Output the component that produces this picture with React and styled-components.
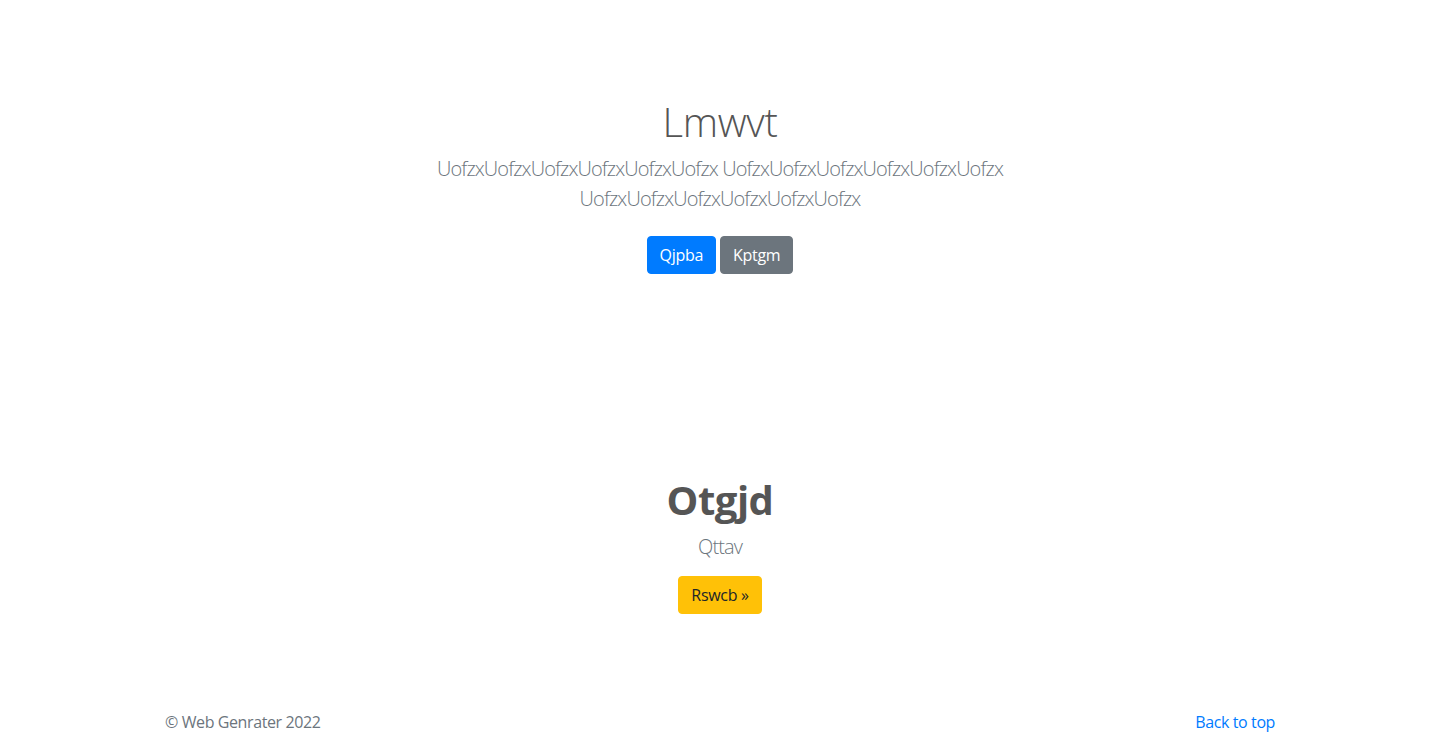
import styled, { createGlobalStyle } from 'styled-components';

const GlobalStyle = createGlobalStyle`
  * {
    box-sizing: border-box;
  }
  body {
    margin: 0;
    background: #fff;
    font-family: "Open Sans", "Noto Sans", Arial, sans-serif;
    font-size: 16px;
    line-height: 1.5;
    color: #212529;
  }
`;

const Page = styled.main`
  display: flex;
  flex-direction: column;
  min-height: 100vh;
`;

const Hero = styled.section`
  display: flex;
  flex-direction: column;
  align-items: center;
  text-align: center;
  padding: ${({ $top }) => $top}px 16px ${({ $bottom }) => $bottom}px;
`;

const Heading = styled.h1`
  margin: 0 0 8px;
  font-size: 40px;
  line-height: 1.2;
  font-weight: ${({ $bold }) => ($bold ? 700 : 300)};
  letter-spacing: ${({ $bold }) => ($bold ? '-0.5px' : '-0.3px')};
  color: #555;
`;

const Lead = styled.p`
  margin: 0 0 ${({ $mb }) => $mb}px;
  max-width: 590px;
  font-size: 20px;
  line-height: 1.5;
  font-weight: 300;
  letter-spacing: -0.9px;
  color: #6c757d;
`;

const Actions = styled.p`
  display: flex;
  justify-content: center;
  gap: 4px;
  margin: 0;
`;

const variants = {
  primary: { bg: '#007bff', fg: '#fff' },
  secondary: { bg: '#6c757d', fg: '#fff' },
  warning: { bg: '#ffc107', fg: '#212529' },
};

const Button = styled.a`
  display: inline-block;
  padding: 6px 12px;
  border: 1px solid ${({ $variant }) => variants[$variant].bg};
  border-radius: 4px;
  font-size: 16px;
  line-height: 1.5;
  letter-spacing: -0.3px;
  text-decoration: none;
  cursor: pointer;
  background: ${({ $variant }) => variants[$variant].bg};
  color: ${({ $variant }) => variants[$variant].fg};
`;

const Footer = styled.footer`
  width: 100%;
  max-width: 1140px;
  margin: 0 auto;
  padding: 0 15px 48px;
  display: flex;
  justify-content: space-between;
  align-items: center;
  color: #6c757d;
  font-size: 16px;
  letter-spacing: -0.4px;
`;

const FooterLink = styled.a`
  color: #007bff;
  text-decoration: none;
`;

const word = 'UofzxUofzxUofzxUofzxUofzxUofzx';

export default function App() {
  return (
    <>
      <GlobalStyle />
      <Page>
        <Hero $top={98} $bottom={202}>
          <Heading>Lmwvt</Heading>
          <Lead $mb={22}>
            {word} {word} {word}
          </Lead>
          <Actions>
            <Button $variant="primary">Qjpba</Button>
            <Button $variant="secondary">Kptgm</Button>
          </Actions>
        </Hero>
        <Hero $top={0} $bottom={96}>
          <Heading $bold>Otgjd</Heading>
          <Lead $mb={14}>Qttav</Lead>
          <Actions>
            <Button $variant="warning">Rswcb »</Button>
          </Actions>
        </Hero>
        <Footer>
          <span>© Web Genrater 2022</span>
          <FooterLink href="#">Back to top</FooterLink>
        </Footer>
      </Page>
    </>
  );
}
